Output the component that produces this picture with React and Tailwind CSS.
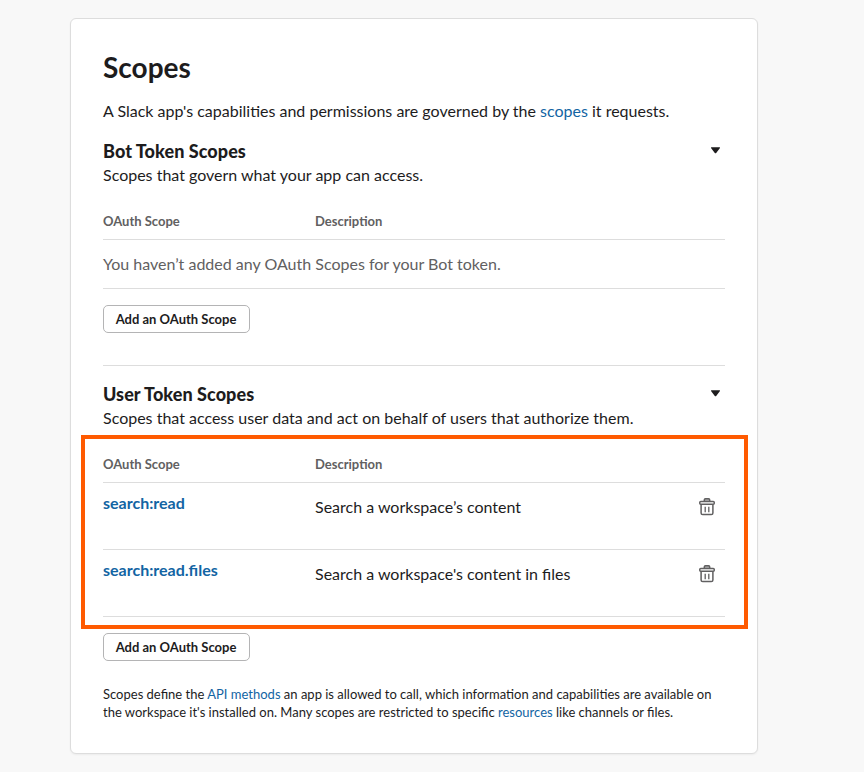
// src/components/ScopesCard.jsx
import React, { useState } from "react";
import clsx from "clsx";

const USER_SCOPES = [
  { name: "search:read", description: "Search a workspace’s content" },
  { name: "search:read.files", description: "Search a workspace's content in files" },
];

const TrashIcon = () => (
  <svg width="18" height="18" viewBox="0 0 18 18" fill="none" stroke="#616061" strokeWidth="1.5" strokeLinejoin="round">
    <path d="M6.300 3.300V1.900c0-.7.4-1.100 1.100-1.100h3.200c.7 0 1.100.4 1.100 1.100v1.400" fill="#b0afb0" />
    <path d="M3.100 6.200v8.700c0 1 .6 1.600 1.600 1.600h8.600c1 0 1.600-.6 1.600-1.600V6.200" />
    <rect x="1.750" y="3.400" width="14.500" height="2.900" rx="1" fill="#ffffff" />
    <path d="M7.200 8.700v5.500M10.800 8.700v5.500" strokeWidth="1.300" />
  </svg>
);

const Link = ({ children, className }) => (
  <a href="#" className={clsx("text-[#1264a3]", className)}>
    {children}
  </a>
);

const AddButton = () => (
  <button className="mt-4 block h-7 w-[147px] rounded-[5px] border border-[#b4b4b5] pr-px text-[13px] leading-none font-bold">
    Add an OAuth Scope
  </button>
);

const SectionHeader = ({ title, subtitle, onToggle }) => (
  <div className="mt-4 flex justify-between">
    <div className="leading-6">
      <h2 className="text-[18px] leading-6 font-black tracking-[0.06px]">{title}</h2>
      <p>{subtitle}</p>
    </div>
    <button onClick={onToggle} className="mt-2 mr-[5px] h-[7px] w-[9px]" aria-label={title}>
      <svg width="9" height="7" viewBox="0 0 9 7" className="block">
        <path d="M.6 .3h7.800c.6 0 .8.500.4.900L5.200 5.900a1 1 0 0 1-1.400 0L.2 1.200C-.2.800 0 .3.6.3z" fill="#1d1c1d" />
      </svg>
    </button>
  </div>
);

const TableHead = () => (
  <div className="flex h-[37px] items-center border-b border-[#dddddd] pt-0.5 text-[13px] font-bold text-[#616061]">
    <div className="w-[212px]">OAuth Scope</div>
    <div>Description</div>
  </div>
);

const App = () => {
  const [botOpen, setBotOpen] = useState(true);
  const [userOpen, setUserOpen] = useState(true);

  return (
    <div className="h-[772px] bg-[#f8f8f8] pt-[18px] pl-[70px] font-[Lato,sans-serif] text-[16px] text-[#1d1c1d]">
      <div className="h-[736px] w-[688px] rounded-[6px] border border-[#dddddd] bg-white px-8 pt-[30px] shadow-[0_1px_2px_rgba(0,0,0,0.05)]">
        <h1 className="text-[28px] leading-9 font-bold">Scopes</h1>
        <p className="mt-3.5 leading-6">
          A Slack app's capabilities and permissions are governed by the <Link>scopes</Link> it requests.
        </p>

        {/* Bot scopes */}
        <SectionHeader
          title="Bot Token Scopes"
          subtitle="Scopes that govern what your app can access."
          onToggle={() => setBotOpen(!botOpen)}
        />
        {botOpen && (
          <div className="mt-4">
            <TableHead />
            <div className="flex h-[49px] items-center border-b border-[#dddddd] text-[#616061]">
              You haven’t added any OAuth Scopes for your Bot token.
            </div>
            <AddButton />
          </div>
        )}

        <hr className="mt-8 border-[#dddddd]" />

        {/* User scopes */}
        <SectionHeader
          title="User Token Scopes"
          subtitle="Scopes that access user data and act on behalf of users that authorize them."
          onToggle={() => setUserOpen(!userOpen)}
        />
        {userOpen && (
          <div className="mt-4">
            <div className="relative">
              <TableHead />
              {USER_SCOPES.map((scope) => (
                <div key={scope.name} className="flex h-[67px] items-start border-b border-[#dddddd] leading-6">
                  <div className="w-[212px] pt-2">
                    <Link className="font-bold">{scope.name}</Link>
                  </div>
                  <div className="flex-1 pt-3">{scope.description}</div>
                  <button className="mt-[15px] mr-[9px]" aria-label="Remove scope">
                    <TrashIcon />
                  </button>
                </div>
              ))}
              <div className="pointer-events-none absolute -top-[11px] -right-[23px] -bottom-[12px] -left-[22px] border-4 border-[#ff5a00]" />
            </div>
            <AddButton />
          </div>
        )}

        <p className="mt-6 text-[13px] leading-[18px]">
          Scopes define the <Link>API methods</Link> an app is allowed to call, which information and capabilities are
          available on the workspace it's installed on. Many scopes are restricted to specific <Link>resources</Link>{" "}
          like channels or files.
        </p>
      </div>
    </div>
  );
};

export default App;
